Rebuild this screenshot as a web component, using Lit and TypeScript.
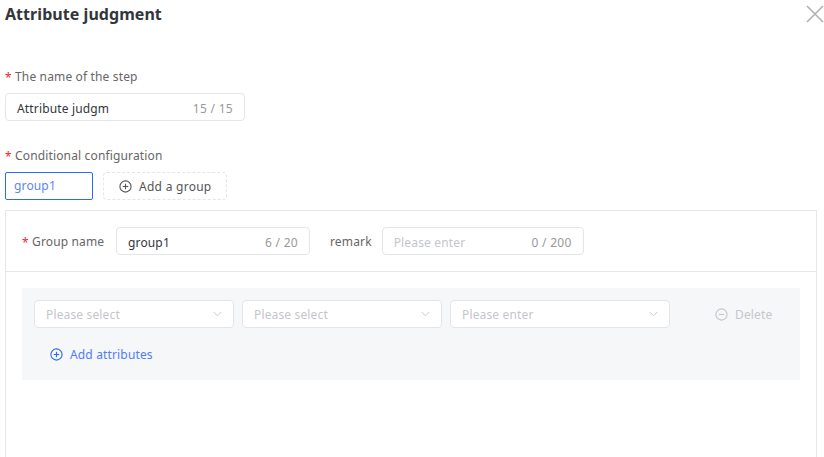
import { LitElement, html, css, svg } from "lit";
import { customElement } from "lit/decorators.js";

const chevron = html`<svg class="chev" width="9" height="6" viewBox="0 0 9 6"><path d="M.5.8 4.5 4.8 8.5.8" fill="none" stroke="#c9cbd0" stroke-width="1"/></svg>`;
const circle = (c: string, plus: boolean) => html`<svg width="13" height="13" viewBox="0 0 13 13" fill="none" stroke=${c} stroke-width="1.1"><circle cx="6.5" cy="6.5" r="5.6"/><path d="M3.8 6.5h5.4"/>${plus ? svg`<path d="M6.5 3.8v5.4"/>` : ""}</svg>`;

@customElement("app-root")
export class AppRoot extends LitElement {
  static styles = css`
    :host { display: block; width: 824px; height: 457px; overflow: hidden; background: #fff;
      font-family: "Noto Sans", sans-serif; font-size: 12px; letter-spacing: .15px; color: #666; box-sizing: border-box; padding-left: 5px; }
    * { box-sizing: border-box; }
    .head { display: flex; justify-content: space-between; height: 47px; }
    .title { font-size: 16px; font-weight: 700; letter-spacing: .05px; color: #33363b; line-height: 28px; }
    .close { margin-top: 5px; }
    .label { display: flex; gap: 4px; height: 18px; line-height: 20px; color: #666; }
    .star { width: 6px; color: #f5222d; font-size: 12px; line-height: 21px; letter-spacing: 0; }
    .f1 { margin-top: 20px; }
    .input { display: flex; align-items: center; justify-content: space-between; height: 28px; border: 1px solid #e4e5e8; border-radius: 4px; padding: 2px 11px 0; background: #fff; color: #33363b; }
    .count { color: #999; letter-spacing: .3px; }
    .ph { color: #c4c6cb; }
    .name { width: 240px; margin-top: 8px; }
    .f2 { margin-top: 25px; }
    .tabs { display: flex; gap: 10px; margin-top: 8px; }
    .tab { width: 88px; height: 28px; border: 1px solid #2b6cf0; border-radius: 2px; color: #5b86f5; padding-left: 8px; line-height: 26px; }
    .add { display: flex; align-items: center; gap: 7px; width: 124px; height: 28px; border: 1px dashed #e4e5e8; border-radius: 4px; padding-left: 15px; color: #555; letter-spacing: .27px; }
    .panel { width: 812px; height: 260px; margin-top: 10px; border: 1px solid #e6e7ea; }
    .row { display: flex; align-items: center; height: 61px; padding: 0 0 0 16px; border-bottom: 1px solid #e6e7ea; }
    .row .label { width: 94px; flex: none; }
    .gn { width: 194px; flex: none; }
    .rk { margin-left: 20px; margin-right: 10px; }
    .rm { width: 202px; flex: none; }
    .grey { width: 778px; height: 92px; margin: 16px 0 0 16px; background: #f6f7f9; padding: 12px 12px; }
    .line { display: flex; gap: 8px; }
    .sel { width: 200px; padding-top: 0; }
    .sel.w { width: 220px; }
    .sel span { color: #c4c6cb; }
    .del { display: flex; align-items: center; gap: 7px; margin-left: 37px; color: #c4c6cb; }
    .attr { display: flex; align-items: center; gap: 7px; margin: 16px 0 0 16px; color: #4f7cf7; height: 20px; }
  `;

  render() {
    return html`
      <div class="head">
        <div class="title">Attribute judgment</div>
        <svg class="close" width="18" height="18" viewBox="0 0 18 18"><path d="M1 1 17 17M17 1 1 17" stroke="#b0b0b0" stroke-width="1.6"/></svg>
      </div>
      <div class="label f1"><span class="star">*</span>The name of the step</div>
      <div class="input name"><span>Attribute judgm</span><span class="count">15 / 15</span></div>
      <div class="label f2"><span class="star">*</span>Conditional configuration</div>
      <div class="tabs">
        <div class="tab">group1</div>
        <div class="add">${circle("#555", true)}Add a group</div>
      </div>
      <div class="panel">
        <div class="row">
          <div class="label"><span class="star">*</span>Group name</div>
          <div class="input gn"><span>group1</span><span class="count">6 / 20</span></div>
          <div class="rk">remark</div>
          <div class="input rm"><span class="ph">Please enter</span><span class="count">0 / 200</span></div>
        </div>
        <div class="grey">
          <div class="line">
            <div class="input sel"><span>Please select</span>${chevron}</div>
            <div class="input sel"><span>Please select</span>${chevron}</div>
            <div class="input sel w"><span>Please enter</span>${chevron}</div>
            <div class="del">${circle("#c4c6cb", false)}Delete</div>
          </div>
          <div class="attr">${circle("#2b6cf0", true)}Add attributes</div>
        </div>
      </div>
    `;
  }
}
